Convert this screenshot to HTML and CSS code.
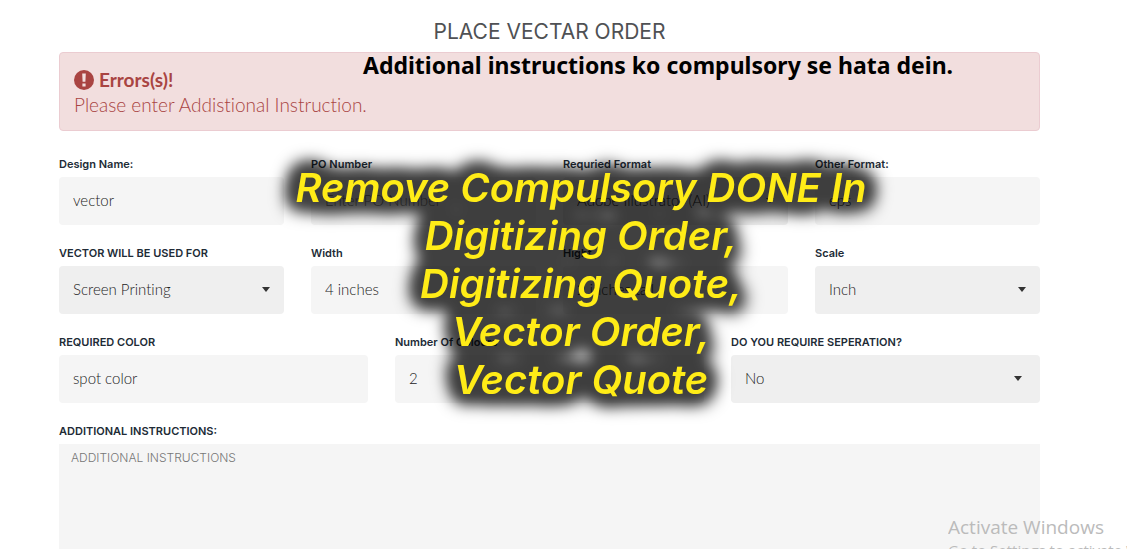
FILE: index.html
```html
<!DOCTYPE html>
<html lang="en">
<head>
<meta charset="utf-8">
<title>Place Vectar Order</title>
<link rel="stylesheet" href="styles.css">
</head>
<body>
<main class="page">
  <h1 class="title">PLACE VECTAR ORDER</h1>
  <section class="alert" role="alert">
    <strong class="alert-title">
      <svg class="alert-icon" viewBox="0 0 20 20" aria-hidden="true"><circle cx="10" cy="10" r="10" fill="#a94442"/><path d="M8.2 3.4h3.6l-.4 8.4H8.6zM8.4 13.4h3.2v3H8.4z" fill="#f2dede"/></svg>
      Errors(s)!
    </strong>
    <p class="alert-text">Please enter Addistional Instruction.</p>
    <p class="alert-note">Additional instructions ko compulsory se hata dein.</p>
  </section>

  <form class="form">
    <div class="row four">
      <div class="field"><label for="design">Design Name:</label><input id="design" type="text" value="vector"></div>
      <div class="field"><label for="po">PO Number</label><input id="po" type="text" placeholder="Enter PO Number"></div>
      <div class="field"><label for="format">Requried Format</label><div class="select"><select id="format"><option>Adobe Illustrator (AI)</option></select></div></div>
      <div class="field"><label for="other">Other Format:</label><input id="other" type="text" value="eps"></div>
    </div>
    <div class="row four">
      <div class="field"><label for="used">VECTOR WILL BE USED FOR</label><div class="select"><select id="used"><option>Screen Printing</option></select></div></div>
      <div class="field"><label for="width">Width</label><input id="width" type="text" value="4 inches"></div>
      <div class="field"><label for="height">Hight</label><input id="height" type="text" value="2 inches tall"></div>
      <div class="field"><label for="scale">Scale</label><div class="select"><select id="scale"><option>Inch</option></select></div></div>
    </div>
    <div class="row three">
      <div class="field"><label for="color">REQUIRED COLOR</label><input id="color" type="text" value="spot color"></div>
      <div class="field"><label for="count">Number Of Colours</label><input id="count" type="text" value="2"></div>
      <div class="field"><label for="sep">DO YOU REQUIRE SEPERATION?</label><div class="select"><select id="sep"><option>No</option></select></div></div>
    </div>
    <div class="field grow"><label for="extra">ADDITIONAL INSTRUCTIONS:</label><textarea id="extra" placeholder="ADDITIONAL INSTRUCTIONS"></textarea></div>
  </form>
</main>

<svg class="defs" aria-hidden="true">
  <filter id="glow" x="-10%" y="-20%" width="120%" height="140%" color-interpolation-filters="sRGB">
    <feGaussianBlur in="SourceAlpha" stdDeviation="9" result="soft"/>
    <feComponentTransfer in="soft" result="full"><feFuncA type="linear" slope="12"/></feComponentTransfer>
    <feComponentTransfer in="full" result="shade"><feFuncA type="linear" slope="0.75"/></feComponentTransfer>
    <feGaussianBlur in="shade" stdDeviation="6" result="halo"/>
    <feMerge><feMergeNode in="halo"/><feMergeNode in="SourceGraphic"/></feMerge>
  </filter>
</svg>
<p class="stamp">Remove Compulsory DONE In<br>Digitizing Order,<br>Digitizing Quote,<br>Vector Order,<br>Vector Quote</p>

<aside class="watermark">
  <p class="watermark-title">Activate Windows</p>
  <p class="watermark-text">Go to Settings to activate Windows.</p>
</aside>
</body>
</html>
```

FILE: styles.css
```css
* { box-sizing: border-box; }
body {
  margin: 0;
  height: 100vh;
  overflow: hidden;
  position: relative;
  background: #fff;
  font-family: Lato, sans-serif;
  font-variant-ligatures: none;
}
p, h1 { margin: 0; }
.page {
  min-height: 100vh;
  padding: 12px 87px 0 59px;
  display: flex;
  flex-direction: column;
}
.title {
  font: 400 21px/40px Inter, sans-serif;
  color: #4f5154;
  text-align: center;
}
.alert {
  position: relative;
  padding: 14px 14px 13px;
  border: 1px solid #ebccd1;
  border-radius: 4px;
  background: #f2dede;
  color: #a94442;
  font-size: 19px;
  line-height: 25px;
}
.alert-title { display: flex; align-items: center; gap: 5px; }
.alert-icon { width: 20px; height: 20px; }
.alert-text { font-weight: 300; }
.alert-note {
  position: absolute;
  left: 303px;
  top: -3px;
  color: #000;
  font: 700 23px/30px "Noto Sans", sans-serif;
  white-space: nowrap;
}
.form {
  flex: 1;
  margin-top: 25px;
  display: flex;
  flex-direction: column;
  gap: 20px;
}
.row { display: grid; gap: 27px; }
.four { grid-template-columns: repeat(4, 1fr); }
.three { grid-template-columns: repeat(3, 1fr); }
.field { display: flex; flex-direction: column; gap: 5px; min-width: 0; }
label { font: 600 11px/16px Inter, sans-serif; color: #212b36; white-space: nowrap; }
input, select, textarea {
  display: block;
  width: 100%;
  height: 48px;
  margin: 0;
  padding: 0 14px 2px;
  border: 0;
  border-radius: 4px;
  background: #f5f5f5;
  color: #222;
  font: 300 15px/20px Lato, sans-serif;
  font-variant-ligatures: none;
}
select { appearance: none; background: #efefef; }
.select { position: relative; }
.select::after {
  content: "";
  position: absolute;
  right: 14px;
  top: 21px;
  border: 4px solid transparent;
  border-top: 5px solid #333;
  border-bottom: 0;
}
.three .select::after { right: 18px; }
input::placeholder { color: #777; }
.grow { flex: 1; }
textarea {
  flex: 1;
  min-height: 120px;
  padding: 4px 12px;
  border-radius: 0;
  resize: none;
}
textarea::placeholder { color: #777; font: 300 12px/20px Inter, sans-serif; }
.defs { position: absolute; width: 0; height: 0; }
.stamp {
  position: absolute;
  left: 281px;
  top: 164px;
  width: 600px;
  text-align: center;
  white-space: nowrap;
  color: #ffec17;
  font: italic 600 40px/48px Inter, sans-serif;
  filter: url(#glow);
  pointer-events: none;
}
.watermark {
  position: absolute;
  left: 948px;
  right: 0;
  top: 514px;
  overflow: hidden;
  color: #bbb;
  font-family: "Open Sans", sans-serif;
  white-space: nowrap;
}
.watermark-title { font-size: 19px; line-height: 26px; }
.watermark-text { font-size: 15px; line-height: 20px; }
```
